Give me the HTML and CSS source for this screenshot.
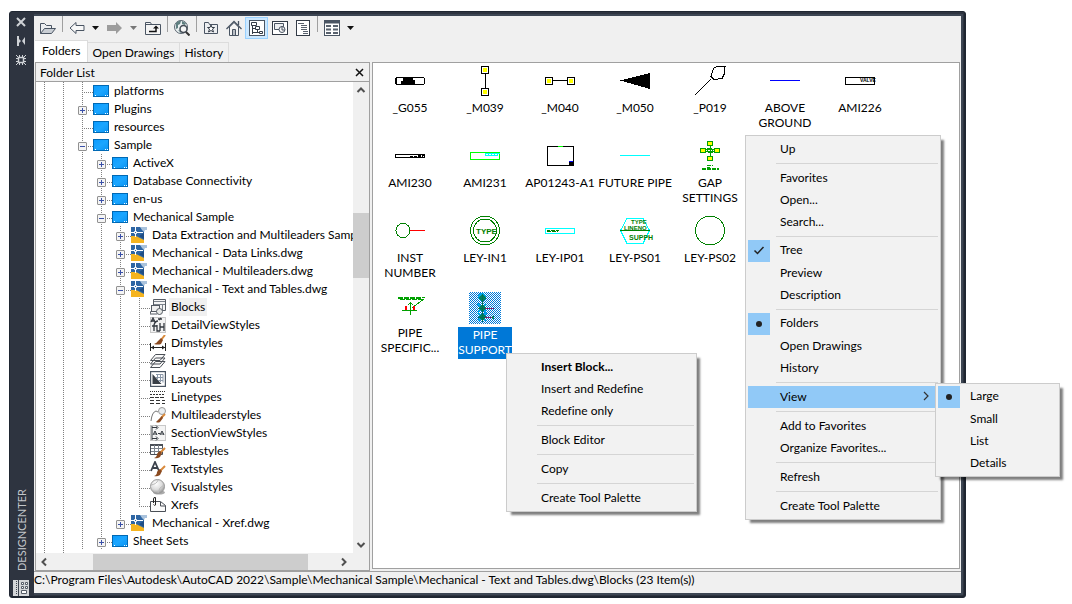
FILE: index.html
```html
<!DOCTYPE html>
<html lang="en">
<head>
<meta charset="utf-8">
<title>DesignCenter</title>
<link rel="stylesheet" href="styles.css">
</head>
<body>
<svg class="sprite" aria-hidden="true">
  <linearGradient id="blue" x1="0" y1="0" x2="1" y2="1"><stop offset="0" stop-color="#0a9bff"/><stop offset=".5" stop-color="#1ba6ff"/><stop offset="1" stop-color="#0a93f2"/></linearGradient>
  <radialGradient id="ball" cx=".4" cy=".3" r=".7"><stop offset="0" stop-color="#fff"/><stop offset=".6" stop-color="#dcdcdc"/><stop offset="1" stop-color="#999"/></radialGradient>
  <symbol id="folder" viewBox="0 0 16 16"><rect x=".5" y="2.5" width="15" height="11" fill="url(#blue)" stroke="#0069b4"/><path d="M2 12.5h1M12 12.5h1M14 12.5h1" stroke="#fff"/></symbol>
  <symbol id="dwg" viewBox="0 0 16 16"><path d="M0 0h13v16H0z" fill="#2e66a4"/><path d="M0 9l5 0 8 4v3H0z" fill="#f5b41f"/><path d="M9 0h7v3h-2l-1 2-2-2z" fill="#a9c2dc"/><path d="M0 5.500h3M6 5.500h6M4.500 0v4M4.500 7v3" stroke="#fff"/><path d="M3.500 4.500h2v2h-2z" fill="none" stroke="#fff"/><path d="M8 9l5-3v6z" fill="#1f4d84"/></symbol>
  <symbol id="brush" viewBox="0 0 16 16"><path d="M15 5l-5 5" stroke="#d98a3b" stroke-width="2"/><path d="M10 8l2 2-2 4q-3 2-6 1 3-1 3-4 1-2 3-3z" fill="#8a4a20"/></symbol>
  <symbol id="blocks" viewBox="0 0 16 16"><path d="M3.500 6V.5h12v11H12" fill="#f5f5f5" stroke="#555b63"/><path d="M4 2.500h11M4 5.500h11M12.500 5v6" stroke="#7b828b"/><rect x="1.500" y="6.500" width="8" height="6" fill="#f0f0f0" stroke="#555b63"/><path d="M1 12l-1 3h7" stroke="#555b63" fill="none"/><circle cx="9.500" cy="12.500" r="3" fill="#e8eae8" stroke="#555b63"/></symbol>
  <symbol id="detail" viewBox="0 0 16 16"><rect x=".5" y=".5" width="15" height="15" fill="#f2f2f2" stroke="#c8c8c8"/><path d="M1 5l2-4 2 4M2 4h3M8 2h4M11 1l-2 2M8 4q-3 0-4 4v6M2 9h5M10 6v8M14 6v8M10 10h4M7 8v6h3" fill="none" stroke="#33383f" stroke-width="1.300"/></symbol>
  <symbol id="dim" viewBox="0 0 16 16"><path d="M.5 8v8M15.500 8v8M1 12.500h14" stroke="#222" fill="none"/><path d="M1 12.500l3-2v4zM15 12.500l-3-2v4z" fill="#222"/><path d="M15 0l-4 5" stroke="#d98a3b" stroke-width="2"/><path d="M11 3l2 2-2 4q-3 1-7 0 3-1 4-3z" fill="#8a4a20"/></symbol>
  <symbol id="layers" viewBox="0 0 16 16"><path d="M.5 14.500h9.500l5-6H5.500zM.5 11h9.500l5-6H5.500zM.5 7.500h9.500l5-6H5.500z" fill="#fafafa" stroke="#4a4f56"/></symbol>
  <symbol id="layouts" viewBox="0 0 16 16"><rect x=".6" y=".6" width="14.800" height="14.800" fill="#fff" stroke="#4a5563" stroke-width="1.200"/><path d="M2.500 3v10h9z" fill="#3a4048"/><path d="M6 3.500h7v8M6 6.500h7M8 9.500h5M7.500 3v5M10.500 3v8" fill="none" stroke="#8a97a8"/></symbol>
  <symbol id="linetypes" viewBox="0 0 16 16"><path d="M0 2.500h15" stroke="#333" stroke-dasharray="1 1"/><path d="M0 5.500h15" stroke="#333" stroke-dasharray="2 1"/><path d="M0 8.500h15" stroke="#333" stroke-dasharray="4 1"/><path d="M0 11.500h15M0 14.500h15" stroke="#333" stroke-dasharray="4 2"/></symbol>
  <symbol id="mleader" viewBox="0 0 16 16"><path d="M1 14q1-9 5-10l2 1" fill="none" stroke="#777"/><circle cx="12" cy="4" r="3.500" fill="#e9edf0" stroke="#999"/><path d="M15 7l-4 4" stroke="#d98a3b" stroke-width="2"/><path d="M12 9l1 2-3 4q-2 1-4 0 3-3 6-6z" fill="#8a4a20"/></symbol>
  <symbol id="section" viewBox="0 0 16 16"><rect x=".5" y=".5" width="15" height="15" fill="#f4f4f4" stroke="#c8c8c8"/><path d="M2 1v14M2 2.500h5M2 13.500h5M6 .5l2 2-2 2M6 11.500l2 2-2 2M3 10l2-4 2 4M4 9h3M8 8.500h2M10 10l2-4 2 4M11 9h3" fill="none" stroke="#33383f"/></symbol>
  <symbol id="tables" viewBox="0 0 16 16"><path d="M.5 1.500h12v10H.5z" fill="#fff" stroke="#4a4f56"/><path d="M0 2h13" stroke="#4a4f56" stroke-width="2"/><path d="M1 5.500h12M1 8.500h12M4.500 2v9M8.500 2v9" stroke="#7b828b"/><use href="#brush"/></symbol>
  <symbol id="textst" viewBox="0 0 16 16"><path d="M1 10l4-9 4 9M3 7h5" fill="none" stroke="#3b424c" stroke-width="1.800"/><use href="#brush"/></symbol>
  <symbol id="visual" viewBox="0 0 16 16"><ellipse cx="9" cy="13.500" rx="6" ry="2" fill="#aaa"/><circle cx="7.500" cy="7.500" r="7" fill="url(#ball)" stroke="#999"/><path d="M1 6q6-1 7-5M8 14q1-6 6-8" stroke="#bbb" fill="none"/></symbol>
  <symbol id="xrefs" viewBox="0 0 16 16"><path d="M.5 4.500h10l5 4v6H.5z" fill="#fafafa" stroke="#4a4f56"/><path d="M10.500 5v4h5" fill="none" stroke="#4a4f56"/><path d="M3.500 6V2q0-2 2-1.500V8q-1 1-2-.5" fill="none" stroke="#222"/></symbol>
</svg>

<main class="window">
  <aside class="rail">
    <button class="rail-btn" aria-label="Close"><svg width="10" height="10"><path d="M1 1l8 8M9 1L1 9" stroke="#cfd2d6" stroke-width="2"/></svg></button>
    <button class="rail-btn" aria-label="Auto-hide"><svg width="10" height="10"><path d="M1 0h2v10H1z" fill="#cfd2d6"/><path d="M3 3l2 2-2 2zM9 1v8L6 5z" fill="#cfd2d6"/></svg></button>
    <button class="rail-btn" aria-label="Properties"><svg width="10" height="10"><rect x="2.500" y="2.500" width="5" height="5" fill="none" stroke="#cfd2d6" stroke-width="1.500"/><path d="M0 0l2.500 2.500M10 0L7.500 2.500M0 10l2.500-2.500M10 10L7.500 7.500M3.500 0v2M6.500 0v2M3.500 8v2M6.500 8v2M0 3.500h2M0 6.500h2M8 3.500h2M8 6.500h2" stroke="#cfd2d6"/></svg></button>
    <span class="rail-title">DESIGNCENTER</span>
    <svg class="rail-logo" width="16" height="16"><rect width="16" height="16" fill="#d4d6d8"/><path d="M3.500 1v14" stroke="#3d444f" stroke-dasharray="1 1"/><path d="M5.500 0v16" stroke="#3d444f"/><path d="M8.500 2.500h2v2h-2zM12.500 2.500h2v2h-2zM8.500 6.500h2v2h-2zM12.500 6.500h2v2h-2zM8.500 10.500h5v3h-5z" fill="#fff" stroke="#555c66"/></svg>
  </aside>

  <div class="content">
    <div class="toolbar">
      <button class="tool" aria-label="Load"><svg width="18" height="16"><path d="M1.500 13.500v-10h4l2 2h5v3" fill="#eceef0" stroke="#4a5563"/><path d="M1.500 13.500l4-5h11l-4 5z" fill="#c9ced4" stroke="#4a5563"/></svg></button>
      <span class="divider"></span>
      <button class="tool" aria-label="Back"><svg width="16" height="16"><path d="M1 8l6-5.500v3h8v5H7v3z" fill="#f8f8f8" stroke="#4a5563"/></svg></button>
      <button class="drop" aria-label="Back history"><svg width="7" height="4"><path d="M0 0h7L3.500 4z" fill="#111"/></svg></button>
      <button class="tool" aria-label="Forward"><svg width="16" height="16"><path d="M15 8L9 2v3H0v6h9v3z" fill="#9c9c9c"/></svg></button>
      <button class="drop" aria-label="Forward history"><svg width="7" height="4"><path d="M0 0h7L3.500 4z" fill="#777"/></svg></button>
      <button class="tool" aria-label="Up"><svg width="16" height="16"><path d="M.5 14.500v-12h5l1 2h9v10z" fill="#f4f4f4" stroke="#4a5563"/><path d="M1 4.500h6" stroke="#4a5563"/><path d="M4 11.500h7V7" fill="none" stroke="#111" stroke-width="1.500"/><path d="M8 8.500l3-3 3 3z" fill="#111"/></svg></button>
      <span class="divider"></span>
      <button class="tool" aria-label="Search"><svg width="16" height="16"><circle cx="7" cy="7" r="6.500" fill="#e9eff0" stroke="#5b6570"/><path d="M2 3q3-3 5-2l-1 3-2 1v3l-2 1zM8 1l4 2-1 2-3-1zM4 10l3 1v2z" fill="#5f7f80"/><circle cx="9.500" cy="9" r="3.500" fill="#f5f5f5" stroke="#444c56" stroke-width="1.500"/><path d="M12 12l3.500 3.500" stroke="#333" stroke-width="2"/></svg></button>
      <span class="divider"></span>
      <button class="tool" aria-label="Favorites"><svg width="16" height="16"><path d="M1.500 13.500v-11h4l1 2h8v9z" fill="#eceef0" stroke="#4a5563"/><path d="M8 5l1 2.500h2.500l-2 1.500 1 3L8 10.500 5.500 12l1-3-2-1.500H7z" fill="#fff" stroke="#333b46"/></svg></button>
      <button class="tool" aria-label="Home"><svg width="16" height="16"><path d="M3.500 7v8.500h9V7L8 2.500z" fill="#f4f4f4" stroke="#4a5563"/><path d="M.5 9L8 1.500 15.500 9M12.500 5V1" fill="none" stroke="#4a5563" stroke-width="1.300"/><path d="M6.500 15V9.500h3V15" fill="#b9bec5" stroke="#4a5563"/></svg></button>
      <button class="tool pressed" aria-label="Tree View Toggle" aria-pressed="true"><svg width="16" height="16"><rect x=".5" y=".5" width="15" height="15" fill="#fff" stroke="#4a5563"/><path d="M2.500 2.500h5v3h-5zM6.500 6.500h4v3h-4zM10.500 11.500h3v2h-3zM3.500 6v8M3.500 8.500h3M4 12.500h6M8.500 10v3" fill="none" stroke="#333b46"/></svg></button>
      <button class="tool" aria-label="Preview"><svg width="16" height="16"><rect x=".5" y="1.500" width="15" height="13" fill="#fff" stroke="#333b46"/><path d="M2.500 3.500h9v6h-9z" fill="#eceef0" stroke="#4a5563"/><circle cx="10" cy="9.500" r="3" fill="#f4f4f4" stroke="#4a5563"/><path d="M10 6v4h3" fill="none" stroke="#4a5563"/></svg></button>
      <button class="tool" aria-label="Description"><svg width="16" height="16"><rect x="1.500" y=".5" width="13" height="15" fill="#fff" stroke="#333b46"/><path d="M3 3.500h6M6 5.500h6M6 7.500h6M6 9.500h6M8 11.500h5M8 13.500h5" stroke="#59626e"/></svg></button>
      <span class="divider"></span>
      <button class="tool" aria-label="Views"><svg width="16" height="16"><rect x=".5" y=".5" width="15" height="15" fill="#fff" stroke="#4a5563"/><path d="M0 2h16" stroke="#4a5563" stroke-width="3"/><path d="M2 6h5M9 6h5M2 9.500h5M9 9.500h5M2 13h5M9 13h5" stroke="#59626e" stroke-width="2"/></svg></button>
      <button class="drop" aria-label="View options"><svg width="7" height="4"><path d="M0 0h7L3.500 4z" fill="#111"/></svg></button>
    </div>

    <div class="tabs" role="tablist">
      <button class="tab active" role="tab" aria-selected="true">Folders</button>
      <button class="tab" role="tab">Open Drawings</button>
      <button class="tab" role="tab">History</button>
    </div>

    <div class="panes">
      <section class="folders">
        <header class="folders-head">
          <h2 class="folders-title">Folder List</h2>
          <button class="close" aria-label="Close folder list"><svg width="9" height="9"><path d="M1 1l7 7M8 1L1 8" stroke="#111" stroke-width="1.500"/></svg></button>
        </header>
        <div class="scroll-area">
          <ul class="tree">
            <li class="node"><div class="row"><span class="twig"></span><svg class="ico"><use href="#folder"/></svg><span class="name">platforms</span></div></li>
            <li class="node"><div class="row"><span class="twig"><button class="exp plus" aria-label="Expand"></button></span><svg class="ico"><use href="#folder"/></svg><span class="name">Plugins</span></div></li>
            <li class="node"><div class="row"><span class="twig"></span><svg class="ico"><use href="#folder"/></svg><span class="name">resources</span></div></li>
            <li class="node"><div class="row"><span class="twig"><button class="exp" aria-label="Collapse"></button></span><svg class="ico"><use href="#folder"/></svg><span class="name">Sample</span></div>
              <ul class="branch">
                <li class="node"><div class="row"><span class="twig"><button class="exp plus" aria-label="Expand"></button></span><svg class="ico"><use href="#folder"/></svg><span class="name">ActiveX</span></div></li>
                <li class="node"><div class="row"><span class="twig"><button class="exp plus" aria-label="Expand"></button></span><svg class="ico"><use href="#folder"/></svg><span class="name">Database Connectivity</span></div></li>
                <li class="node"><div class="row"><span class="twig"><button class="exp plus" aria-label="Expand"></button></span><svg class="ico"><use href="#folder"/></svg><span class="name">en-us</span></div></li>
                <li class="node"><div class="row"><span class="twig"><button class="exp" aria-label="Collapse"></button></span><svg class="ico"><use href="#folder"/></svg><span class="name">Mechanical Sample</span></div>
                  <ul class="branch">
                    <li class="node"><div class="row"><span class="twig"><button class="exp plus" aria-label="Expand"></button></span><svg class="ico"><use href="#dwg"/></svg><span class="name">Data Extraction and Multileaders Samp</span></div></li>
                    <li class="node"><div class="row"><span class="twig"><button class="exp plus" aria-label="Expand"></button></span><svg class="ico"><use href="#dwg"/></svg><span class="name">Mechanical - Data Links.dwg</span></div></li>
                    <li class="node"><div class="row"><span class="twig"><button class="exp plus" aria-label="Expand"></button></span><svg class="ico"><use href="#dwg"/></svg><span class="name">Mechanical - Multileaders.dwg</span></div></li>
                    <li class="node"><div class="row"><span class="twig"><button class="exp" aria-label="Collapse"></button></span><svg class="ico"><use href="#dwg"/></svg><span class="name">Mechanical - Text and Tables.dwg</span></div>
                      <ul class="branch">
                        <li class="node"><div class="row"><span class="twig"></span><svg class="ico"><use href="#blocks"/></svg><span class="name current">Blocks</span></div></li>
                        <li class="node"><div class="row"><span class="twig"></span><svg class="ico"><use href="#detail"/></svg><span class="name">DetailViewStyles</span></div></li>
                        <li class="node"><div class="row"><span class="twig"></span><svg class="ico"><use href="#dim"/></svg><span class="name">Dimstyles</span></div></li>
                        <li class="node"><div class="row"><span class="twig"></span><svg class="ico"><use href="#layers"/></svg><span class="name">Layers</span></div></li>
                        <li class="node"><div class="row"><span class="twig"></span><svg class="ico"><use href="#layouts"/></svg><span class="name">Layouts</span></div></li>
                        <li class="node"><div class="row"><span class="twig"></span><svg class="ico"><use href="#linetypes"/></svg><span class="name">Linetypes</span></div></li>
                        <li class="node"><div class="row"><span class="twig"></span><svg class="ico"><use href="#mleader"/></svg><span class="name">Multileaderstyles</span></div></li>
                        <li class="node"><div class="row"><span class="twig"></span><svg class="ico"><use href="#section"/></svg><span class="name">SectionViewStyles</span></div></li>
                        <li class="node"><div class="row"><span class="twig"></span><svg class="ico"><use href="#tables"/></svg><span class="name">Tablestyles</span></div></li>
                        <li class="node"><div class="row"><span class="twig"></span><svg class="ico"><use href="#textst"/></svg><span class="name">Textstyles</span></div></li>
                        <li class="node"><div class="row"><span class="twig"></span><svg class="ico"><use href="#visual"/></svg><span class="name">Visualstyles</span></div></li>
                        <li class="node end"><div class="row"><span class="twig"></span><svg class="ico"><use href="#xrefs"/></svg><span class="name">Xrefs</span></div></li>
                      </ul>
                    </li>
                    <li class="node end"><div class="row"><span class="twig"><button class="exp plus" aria-label="Expand"></button></span><svg class="ico"><use href="#dwg"/></svg><span class="name">Mechanical - Xref.dwg</span></div></li>
                  </ul>
                </li>
                <li class="node"><div class="row"><span class="twig"><button class="exp plus" aria-label="Expand"></button></span><svg class="ico"><use href="#folder"/></svg><span class="name">Sheet Sets</span></div></li>
              </ul>
            </li>
          </ul>
          <div class="vbar">
            <svg width="16" height="16"><path d="M4.500 10L8 6.500l3.500 3.500" fill="none" stroke="#505050" stroke-width="2"/></svg>
            <span class="vthumb"></span>
            <svg width="16" height="16"><path d="M4.500 6L8 9.500 11.500 6" fill="none" stroke="#505050" stroke-width="2"/></svg>
          </div>
        </div>
        <div class="hbar">
          <svg width="16" height="16"><path d="M10 4.500L6.500 8l3.500 3.500" fill="none" stroke="#505050" stroke-width="2"/></svg>
          <span class="hthumb"></span>
          <svg width="16" height="16"><path d="M6 4.500L9.500 8 6 11.500" fill="none" stroke="#505050" stroke-width="2"/></svg>
        </div>
      </section>

      <section class="viewer">
        <ul class="blocks">
          <li class="block"><svg class="thumb"><rect x="1.500" y="10.500" width="29" height="7" rx="2" fill="#fff" stroke="#000"/><path d="M2.500 11v6" stroke="#000"/><path d="M7 17v-3h2v-3h10v2h2v4z"/></svg><span class="label">_G055</span></li>
          <li class="block"><svg class="thumb"><path d="M16.500 6v16" stroke="#000"/><path d="M12.500-.5h7v7h-7zM12.500 21.500h7v7h-7z" fill="#fff" stroke="#000"/><path d="M14 1h4v4h-4zM14 23h4v4h-4z" fill="#ff0"/></svg><span class="label">_M039</span></li>
          <li class="block"><svg class="thumb"><path d="M8 13.500h15" stroke="#000"/><path d="M1.500 10.500h7v7h-7zM23.500 10.500h7v7h-7z" fill="#fff" stroke="#000"/><path d="M3 12h4v4H3zM25 12h4v4h-4z" fill="#ff0"/></svg><span class="label">_M040</span></li>
          <li class="block"><svg class="thumb"><path d="M1 13.500L31 6v16z"/></svg><span class="label">_M050</span></li>
          <li class="block"><svg class="thumb"><path d="M1 28l16-16M19.500 1.500L23-.5h8l-1 8-2 4-8 1-3-3z" fill="none" stroke="#000"/></svg><span class="label">_P019</span></li>
          <li class="block"><svg class="thumb"><path d="M1 13.500h30" stroke="#00f"/></svg><span class="label">ABOVE GROUND</span></li>
          <li class="block"><svg class="thumb"><rect x="1.500" y="10.500" width="29" height="7" fill="none" stroke="#000"/><text class="micro" x="16" y="15">VALVE</text></svg><span class="label">AMI226</span></li>

          <li class="block"><svg class="thumb"><rect x="1.500" y="12.500" width="29" height="3" rx="1" fill="#fff" stroke="#000"/><path d="M16 14.500h13M24 13.500h6" stroke="#000" stroke-dasharray="3 1"/></svg><span class="label">AMI230</span></li>
          <li class="block"><svg class="thumb"><rect x="1.500" y="10.500" width="29" height="7" fill="none" stroke="#0f0"/><path d="M16 11.500h15M16 13.500h12M16.500 11v3M19.500 11v3M22.500 11v3M25.500 11v3M28.500 11v3" stroke="#0ff"/></svg><span class="label">AMI231</span></li>
          <li class="block"><svg class="thumb"><rect x="3.500" y="4.500" width="26" height="19" fill="none" stroke="#000"/><path d="M14 4.500h5" stroke="#0f0"/><path d="M25 20h5v4h-5z"/><path d="M25 19.500h4" stroke="#00f"/></svg><span class="label">AP01243-A1</span></li>
          <li class="block"><svg class="thumb"><path d="M1 13.500h30" stroke="#0ff"/></svg><span class="label">FUTURE PIPE</span></li>
          <li class="block"><svg class="thumb"><path d="M16.500 4v11M11 7.500h11M11 9.500h11" stroke="#00a000"/><path d="M13.500-.5h5v4h-5zM6.500 6.500h5v4h-5zM20.500 6.500h5v4h-5zM13.500 14.500h5v4h-5z" fill="#ff0" stroke="#00a000"/><path d="M13.500 6.500h5v4h-5zM13 23.500h6M13 25.500h3M8 26.500h17M8 27.500h17" fill="none" stroke="#00a000" stroke-dasharray="4 1"/></svg><span class="label">GAP SETTINGS</span></li>
          <li class="block"></li>
          <li class="block"></li>

          <li class="block"><svg class="thumb"><circle cx="9" cy="13.500" r="7" fill="none" stroke="#008000"/><path d="M16 13.500h15" stroke="#f00"/></svg><span class="label">INST NUMBER</span></li>
          <li class="block"><svg class="thumb"><circle cx="16" cy="13.500" r="14.500" fill="none" stroke="#008000"/><circle cx="16" cy="13.500" r="11.500" fill="none" stroke="#008000"/><text class="tag" x="7" y="17">TYPE</text></svg><span class="label">LEY-IN1</span></li>
          <li class="block"><svg class="thumb"><rect x="1.500" y="11.500" width="29" height="5" fill="none" stroke="#0ff"/><path d="M3 13.500h3M7 13.500h8M3 14.500h11" stroke="#008000" stroke-dasharray="4 1"/></svg><span class="label">LEY-IP01</span></li>
          <li class="block"><svg class="thumb"><path d="M8 1.500h16l6.500 12-6.500 13H8l-6.500-13z" fill="none" stroke="#0ff"/><path d="M1 13.500h30" stroke="#008000"/><text class="note" x="12" y="7">TYPE</text><text class="note" x="5" y="13">LINENO</text><text class="note big" x="10" y="23">SUPPH</text></svg><span class="label">LEY-PS01</span></li>
          <li class="block"><svg class="thumb"><circle cx="16" cy="13.500" r="14.500" fill="none" stroke="#008000"/></svg><span class="label">LEY-PS02</span></li>
          <li class="block"></li>
          <li class="block"></li>

          <li class="block"><svg class="thumb"><path d="M4 5.500h27M4 6.500h24M6 7.500h23" stroke="#00a000" stroke-dasharray="5 1"/><path d="M30 7l-12 9" stroke="#00a000"/><path d="M11 14h2v4h-2zM19 14h2v4h-2z" fill="#f00"/><path d="M16.500 10v13M8 18.500h15M14 13l2.500-2.500L19 13" fill="none" stroke="#00a000"/></svg><span class="label">PIPE SPECIFIC...</span></li>
          <li class="block selected"><svg class="thumb"><g fill="none" stroke="#00a5e8" stroke-width="2"><circle cx="13" cy="5" r="3"/><path d="M9 12l8 8M17 12l-8 8M9 21l8 8M17 21l-8 8"/></g><path d="M13 2l4 4-4 4-4-4zM13 12l4 4-4 4-4-4zM13 21l4 4-4 4-4-4z" fill="#008060"/><path d="M13.500 2v28M9 16.500h8M9 25.500h8" stroke="#007050"/><path d="M16 16.500h9M16 25.500h9" stroke="#80206b"/><path d="M23 24h2v3h-2z" fill="#008060"/></svg><span class="label">PIPE SUPPORT</span></li>
        </ul>

        <ul class="menu block-menu" role="menu">
          <li><button class="item default" role="menuitem">Insert Block...</button></li>
          <li><button class="item" role="menuitem">Insert and Redefine</button></li>
          <li><button class="item" role="menuitem">Redefine only</button></li>
          <li class="rule"></li>
          <li><button class="item" role="menuitem">Block Editor</button></li>
          <li class="rule"></li>
          <li><button class="item" role="menuitem">Copy</button></li>
          <li class="rule"></li>
          <li><button class="item" role="menuitem">Create Tool Palette</button></li>
        </ul>

        <ul class="menu main-menu" role="menu">
          <li><button class="item" role="menuitem">Up</button></li>
          <li class="rule"></li>
          <li><button class="item" role="menuitem">Favorites</button></li>
          <li><button class="item" role="menuitem">Open...</button></li>
          <li><button class="item" role="menuitem">Search...</button></li>
          <li class="rule"></li>
          <li><button class="item" role="menuitemcheckbox" aria-checked="true"><svg class="mark"><path d="M6.500 10.500l3 3 6-6.500" fill="none" stroke="#222" stroke-width="1.500"/></svg>Tree</button></li>
          <li><button class="item" role="menuitem">Preview</button></li>
          <li><button class="item" role="menuitem">Description</button></li>
          <li class="rule"></li>
          <li><button class="item" role="menuitemradio" aria-checked="true"><svg class="mark"><circle cx="11" cy="11" r="3" fill="#222"/></svg>Folders</button></li>
          <li><button class="item" role="menuitem">Open Drawings</button></li>
          <li><button class="item" role="menuitem">History</button></li>
          <li class="rule"></li>
          <li class="has-sub"><button class="item open" role="menuitem" aria-expanded="true">View<svg class="chevron" width="8" height="10"><path d="M2 1l4 4-4 4" fill="none" stroke="#333" stroke-width="1.200"/></svg></button>
            <ul class="menu sub-menu" role="menu">
              <li><button class="item" role="menuitemradio" aria-checked="true"><svg class="mark"><circle cx="11" cy="11" r="3" fill="#222"/></svg>Large</button></li>
              <li><button class="item" role="menuitem">Small</button></li>
              <li><button class="item" role="menuitem">List</button></li>
              <li><button class="item" role="menuitem">Details</button></li>
            </ul>
          </li>
          <li class="rule"></li>
          <li><button class="item" role="menuitem">Add to Favorites</button></li>
          <li><button class="item" role="menuitem">Organize Favorites...</button></li>
          <li class="rule"></li>
          <li><button class="item" role="menuitem">Refresh</button></li>
          <li class="rule"></li>
          <li><button class="item" role="menuitem">Create Tool Palette</button></li>
        </ul>
      </section>
    </div>

    <footer class="status">C:\Program Files\Autodesk\AutoCAD 2022\Sample\Mechanical Sample\Mechanical - Text and Tables.dwg\Blocks (23 Item(s))</footer>
  </div>
</main>
</body>
</html>
```
FILE: styles.css
```css
* { box-sizing: border-box; }

body {
  margin: 0;
  min-height: 100vh;
  padding: 11px 106px 6px 9px;
  display: flex;
  background: #fff;
  color: #000;
  font: 12px/15px Lato, "Open Sans", sans-serif;
  font-variant-ligatures: none;
}

ul { margin: 0; padding: 0; list-style: none; }
button { margin: 0; padding: 0; border: 0; background: none; color: inherit; font: inherit; }
svg { display: block; flex: none; }
.sprite { position: absolute; width: 0; height: 0; }

.window {
  flex: 1;
  min-width: 0;
  display: flex;
  padding-right: 2px;
  background: #2e3440;
  border: 1px solid #1f2631;
  border-radius: 3px;
  box-shadow: inset -1px -1px 0 #1f2631;
}

/* Title rail */
.rail {
  width: 24px;
  flex: none;
  display: flex;
  flex-direction: column;
  align-items: center;
  padding: 5px 2px 1px 0;
  gap: 9px;
}
.rail-btn { width: 10px; height: 10px; }
.rail-title {
  margin-top: auto;
  writing-mode: vertical-rl;
  transform: rotate(180deg);
  color: #c3c6ca;
  font-size: 11px;
}
.rail-logo { width: 16px; height: 16px; }

/* Client area */
.content {
  flex: 1;
  min-width: 0;
  display: flex;
  flex-direction: column;
  margin: 2px 0;
  border: 2px solid #3d4653;
  border-left: 0;
  background: #f0f0f0;
}

.toolbar { display: flex; align-items: center; height: 24px; padding-left: 2px; }
.tool { width: 23px; height: 22px; display: flex; align-items: center; justify-content: center; }
.tool.pressed { background: #cce8ff; box-shadow: inset 0 0 0 1px #99d1ff; }
.drop { width: 15px; height: 22px; display: flex; align-items: center; justify-content: center; }
.divider { width: 1px; height: 16px; margin: 0 2px 8px 3px; background: #a0a0a0; }

.tabs { display: flex; align-items: flex-end; height: 22px; padding-left: 1px; }
.tab {
  height: 20px;
  padding: 0 5px 1px 4px;
  border: 1px solid #dcdcdc;
  border-width: 1px 1px 0 0;
}
.tab.active { height: 22px; padding: 0 7px 3px 7px; background: #fff; }

.panes { flex: 1; display: flex; gap: 2px; padding: 0 1px; min-height: 0; }

.folders {
  width: 335px;
  flex: none;
  display: flex;
  flex-direction: column;
  border: 1px solid #a0a0a0;
  background: #fff;
}
.folders-head {
  height: 19px;
  display: flex;
  align-items: center;
  justify-content: space-between;
  padding: 0 5px 0 4px;
  background: #f0f0f0;
  border-bottom: 1px solid #a0a0a0;
}
.folders-title { margin: 0; font: inherit; }
.close { width: 9px; height: 9px; }

.scroll-area { flex: 1; display: flex; min-height: 0; }
.tree {
  flex: 1;
  min-width: 0;
  overflow: hidden;
  padding-left: 38px;
  background:
    repeating-linear-gradient(#808080 0 1px, transparent 1px 2px) 8px 0 / 1px 100% no-repeat,
    repeating-linear-gradient(#808080 0 1px, transparent 1px 2px) 27px 0 / 1px 100% no-repeat;
}
.node { background: repeating-linear-gradient(#808080 0 1px, transparent 1px 2px) 8px 0 / 1px 100% no-repeat; }
.node.end { background-size: 1px 10px; }
.branch { padding-left: 19px; }
.row { display: flex; align-items: center; height: 18px; white-space: nowrap; }
.twig {
  width: 19px;
  height: 18px;
  flex: none;
  padding: 6px 0 0 4px;
  background: repeating-linear-gradient(90deg, #808080 0 1px, transparent 1px 2px) 8px 10px / 11px 1px no-repeat;
}
.exp {
  display: block;
  width: 9px;
  height: 9px;
  border: 1px solid #919191;
  border-radius: 1px;
  background: linear-gradient(#3a50a8, #3a50a8) 1px 3px / 5px 1px no-repeat, #f4f4f4;
}
.exp.plus {
  background:
    linear-gradient(#3a50a8, #3a50a8) 1px 3px / 5px 1px no-repeat,
    linear-gradient(#3a50a8, #3a50a8) 3px 1px / 1px 5px no-repeat,
    #f4f4f4;
}
.ico { width: 16px; height: 16px; margin-right: 3px; }
.name { height: 18px; padding: 1px 2px; line-height: 15px; }
.name.current { background: #f0f0f0; }

.vbar {
  width: 16px;
  flex: none;
  display: flex;
  flex-direction: column;
  background: #f0f0f0;
}
.vthumb { height: 65px; margin: 115px 0 auto; background: #cdcdcd; }
.hbar { display: flex; align-items: center; height: 17px; padding-right: 17px; background: #f0f0f0; }
.hthumb { width: 68%; height: 16px; margin: 0 auto 0 41px; background: #cdcdcd; }

/* Block thumbnails */
.viewer {
  flex: 1;
  min-width: 0;
  position: relative;
  margin-bottom: 2px;
  border: 1px solid #a0a0a0;
  background: #fff;
}
.blocks { display: grid; grid-template-columns: repeat(auto-fill, 75px); grid-auto-rows: 75px; padding-top: 4px; }
.block { display: flex; flex-direction: column; align-items: center; padding-right: 1px; }
.thumb { width: 32px; height: 32px; overflow: visible; shape-rendering: crispEdges; }
.label { max-width: 74px; padding: 1px 0; text-align: center; }
.selected { gap: 3px; }
.selected .thumb { background: repeating-conic-gradient(#0078d7 0 25%, #fff 0 50%) 0 0 / 2px 2px; }
.selected .label { width: 54px; padding: 0 0 2px; background: #0078d7; color: #fff; }
.micro { font: bold 5px "Liberation Sans", sans-serif; }
.tag { font: bold 8px "Liberation Sans", sans-serif; fill: #008000; }
.note { font: bold 6px "Liberation Sans", sans-serif; fill: #008000; }
.note.big { font-size: 7px; }

/* Menus */
.menu {
  position: absolute;
  padding: 2px;
  background: #f2f2f2;
  border: 1px solid #ccc;
  box-shadow: 4px 4px 2px -1px rgba(0, 0, 0, .5);
}
.block-menu { left: 133px; top: 290px; width: 191px; }
.main-menu { left: 372px; top: 72px; width: 196px; }
.has-sub { position: relative; }
.sub-menu { left: 187px; top: -3px; width: 125px; }
.item {
  display: flex;
  align-items: center;
  width: 100%;
  height: 22px;
  padding: 0 0 2px 32px;
}
.item.default { font-weight: bold; }
.item.open { background: #91c9f7; }
.mark { align-self: flex-start; width: 22px; height: 22px; margin: 0 10px 0 -32px; background: #91c9f7; }
.item:has(.mark) { padding-bottom: 0; line-height: 13px; }
.item:has(.mark) { align-items: flex-start; padding-top: 0; line-height: 20px; }
.chevron { margin: 0 8px 0 auto; }
.rule { height: 7px; padding: 3px 0 3px 28px; }
.rule::before { content: ""; display: block; height: 1px; background: #d5d5d5; }

.status { height: 22px; border-top: 1px solid #a0a0a0; white-space: nowrap; overflow: hidden; }
```
